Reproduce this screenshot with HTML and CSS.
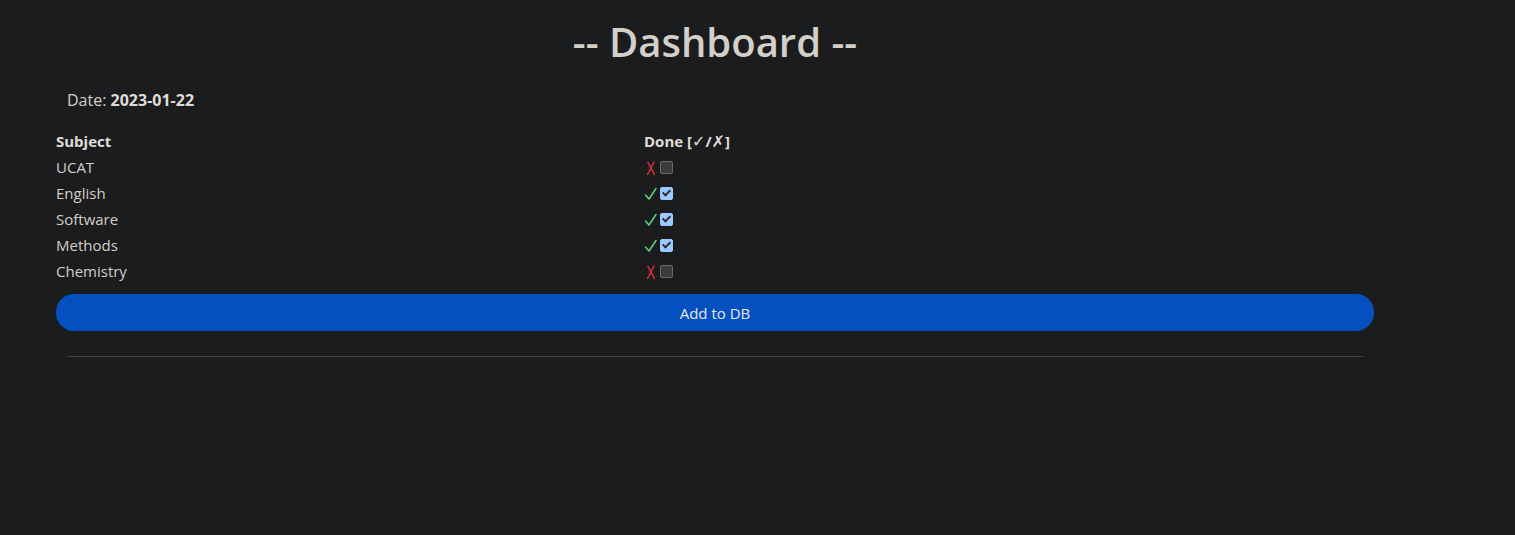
FILE: index.html
```html
<!DOCTYPE html>
<html>
<head>
<meta charset="utf-8">
<link rel="stylesheet" href="styles.css">
</head>
<body>
<div class="main">
  <h1 class="title">-- Dashboard --</h1>
  <p class="date">Date: <b>2023-01-22</b></p>
  <table class="tbl">
    <thead>
      <tr><th class="c1">Subject</th><th>Done [<span class="hg">✓</span>/<span class="hg">✗</span>]</th></tr>
    </thead>
    <tbody>
      <tr><td>UCAT</td><td><svg class="mark no" viewBox="0 0 14 16"><path d="M4 2.5 Q7 9 10.5 14.5 M10 2 Q7 8 3.5 14.5"/></svg><span class="cb"></span></td></tr>
      <tr><td>English</td><td><svg class="mark yes" viewBox="0 0 14 16"><path d="M1.5 9 L5 13 L12 2.5"/></svg><span class="cb on"></span></td></tr>
      <tr><td>Software</td><td><svg class="mark yes" viewBox="0 0 14 16"><path d="M1.5 9 L5 13 L12 2.5"/></svg><span class="cb on"></span></td></tr>
      <tr><td>Methods</td><td><svg class="mark yes" viewBox="0 0 14 16"><path d="M1.5 9 L5 13 L12 2.5"/></svg><span class="cb on"></span></td></tr>
      <tr><td>Chemistry</td><td><svg class="mark no" viewBox="0 0 14 16"><path d="M4 2.5 Q7 9 10.5 14.5 M10 2 Q7 8 3.5 14.5"/></svg><span class="cb"></span></td></tr>
    </tbody>
  </table>
  <button class="btn">Add to DB</button>
  <hr class="rule">
</div>
</body>
</html>
```
FILE: styles.css
```css
html, body { background: #1b1c1e; }
body {
  margin: 0;
  color: #d3cfc9;
  font-family: "Open Sans", "Noto Sans", sans-serif;
}
.main {
  width: 1318px;
  margin-left: 56px;
  padding-top: 16px;
}
.title {
  margin: 0;
  text-align: center;
  font-size: 40px;
  font-weight: 600;
  line-height: 52px;
  color: #d3cfc9;
}
.date {
  margin: 22px 0 0 11px;
  font-size: 16px;
  line-height: 20px;
  color: #d3cfc9;
}
.date b { color: #e0ddd8; }
.tbl {
  border-collapse: collapse;
  width: 100%;
  margin-top: 18px;
  font-size: 15px;
}
.tbl th, .tbl td {
  padding: 0;
  height: 26px;
  text-align: left;
  vertical-align: middle;
}
.tbl th { font-weight: 700; color: #e0ddd8; }
.hg { font-family: "DejaVu Sans", sans-serif; font-weight: 400; font-size: 16px; }
.c1 { width: 588px; }
.mark {
  display: inline-block;
  width: 14px;
  height: 16px;
  margin-right: 2px;
  margin-top: -2px;
  vertical-align: middle;
  fill: none;
  stroke-width: 1.5;
  stroke-linecap: round;
  stroke-linejoin: round;
}
.mark.no { stroke: #e02f2f; }
.mark.yes { stroke: #63d67f; }
.cb {
  display: inline-block;
  width: 11px;
  height: 11px;
  margin-top: -2px;
  border: 1px solid #6a6a6a;
  border-radius: 2px;
  background: #3a3b3d;
  vertical-align: middle;
  position: relative;
}
.cb.on {
  background: #9ccaff;
  border-color: #9ccaff;
}
.cb.on::after {
  content: "";
  position: absolute;
  left: 3px;
  top: 0px;
  width: 3px;
  height: 6px;
  border: solid #2a2c30;
  border-width: 0 2px 2px 0;
  transform: rotate(45deg);
}
.btn {
  display: block;
  width: 100%;
  height: 37px;
  margin-top: 10px;
  border: 0;
  border-radius: 18px;
  background: #0550c0;
  color: #e8e6e3;
  font-family: "Open Sans", "Noto Sans", sans-serif;
  font-size: 15px;
}
.rule {
  margin: 25px 11px 0 11px;
  border: 0;
  border-top: 1px solid #3c3f42;
}
```
